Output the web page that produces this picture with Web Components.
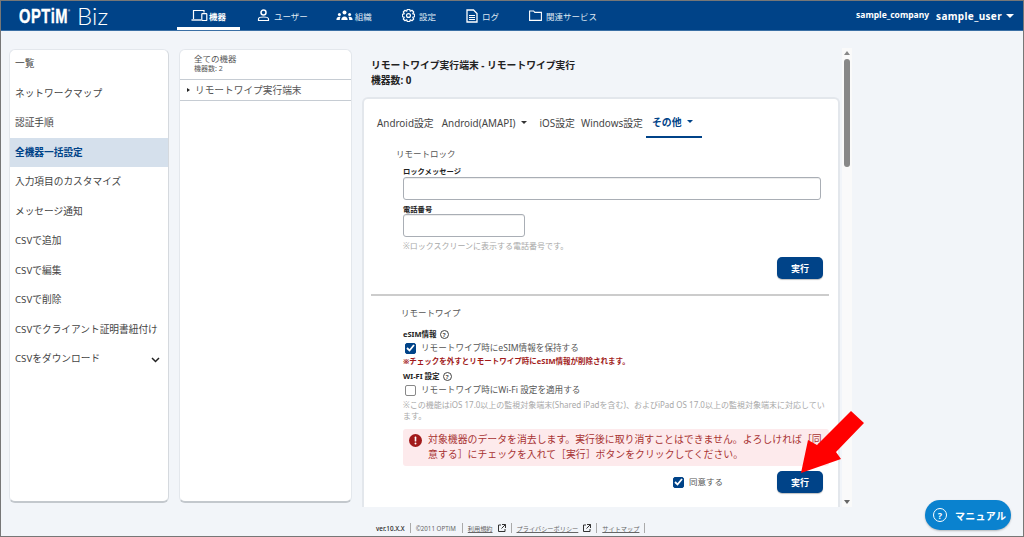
<!DOCTYPE html>
<html lang="ja"><head><meta charset="utf-8"><title>OPTiM Biz</title>
<style>
html,body{margin:0;padding:0;background:#f2f5f9}
body{font-family:"Noto Sans","Noto Sans CJK JP",sans-serif;color:#444}
</style></head><body>
<app-frame>
  <app-header>
    <nav-item active icon="device">機器</nav-item>
    <nav-item icon="user">ユーザー</nav-item>
    <nav-item icon="org">組織</nav-item>
    <nav-item icon="gear">設定</nav-item>
    <nav-item icon="doc">ログ</nav-item>
    <nav-item icon="folder">関連サービス</nav-item>
  </app-header>
  <app-body>
    <side-menu>
      <menu-item>一覧</menu-item>
      <menu-item>ネットワークマップ</menu-item>
      <menu-item>認証手順</menu-item>
      <menu-item active>全機器一括設定</menu-item>
      <menu-item>入力項目のカスタマイズ</menu-item>
      <menu-item>メッセージ通知</menu-item>
      <menu-item>CSVで追加</menu-item>
      <menu-item>CSVで編集</menu-item>
      <menu-item>CSVで削除</menu-item>
      <menu-item>CSVでクライアント証明書紐付け</menu-item>
      <menu-item chevron>CSVをダウンロード</menu-item>
    </side-menu>
    <tree-panel></tree-panel>
    <main-pane>
      <page-title></page-title>
      <settings-card>
        <tab-bar></tab-bar>
        <lock-section></lock-section>
        <wipe-section></wipe-section>
      </settings-card>
    </main-pane>
    <fake-scroll></fake-scroll>
  </app-body>
  <app-footer></app-footer>
  <red-arrow></red-arrow>
  <manual-button></manual-button>
</app-frame>
<script>
const JP='"Noto Sans","Noto Sans CJK JP",sans-serif';
function def(name,css,html,init){
  customElements.define(name,class extends HTMLElement{
    connectedCallback(){
      if(this.shadowRoot)return;
      const r=this.attachShadow({mode:'open'});
      r.innerHTML='<style>'+css+'</style>'+(typeof html==='function'?html(this):html);
      if(init)init(this,r);
    }
  });
}
function gearPath(){
  let d='';const n=8;
  for(let i=0;i<n;i++){
    const a=i*2*Math.PI/n,w=Math.PI/n;
    const pts=[[a-w*.95,8.6],[a-w*.5,11.6],[a+w*.5,11.6],[a+w*.95,8.6]];
    pts.forEach((p,j)=>{d+=(i===0&&j===0?'M':'L')+(12+p[1]*Math.sin(p[0])).toFixed(2)+' '+(12-p[1]*Math.cos(p[0])).toFixed(2);});
  }
  return d+'z';
}
const ICONS={
 device:'<svg width="17" height="13" viewBox="0 0 17 13" fill="none" stroke="#fff" stroke-width="1.2"><path d="M2.500 10V1.500H13V3.500"/><path d="M.5 11h9.500" stroke-width="1.400"/><rect x="10.800" y="4.600" width="5" height="6.900" rx=".6"/></svg>',
 user:'<svg width="13" height="13" viewBox="0 0 13 13" fill="none" stroke="#fff" stroke-width="1.500"><circle cx="6.500" cy="3.600" r="2.500"/><path d="M1.500 11.500V10c0-1.200 2-2 5-2s5 .8 5 2v1.500z" stroke-width="1.200"/></svg>',
 org:'<svg width="17" height="11" viewBox="0 0 17 11" fill="#fff"><circle cx="8.500" cy="2.600" r="2"/><path d="M5.300 10c0-2.300 1.300-3.600 3.200-3.600s3.200 1.300 3.200 3.600z"/><circle cx="3.400" cy="4.400" r="1.500"/><path d="M.4 10c0-2 1.200-3.200 3-3.200.5 0 .8.1 1.100.3-.5.8-.7 1.800-.7 2.900z"/><circle cx="13.600" cy="4.400" r="1.500"/><path d="M16.600 10c0-2-1.200-3.200-3-3.200-.5 0-.8.1-1.100.3.5.8.7 1.800.7 2.900z"/></svg>',
 gear:`<svg width="13" height="13" viewBox="0 0 24 24" fill="none" stroke="#fff" stroke-width="2.200" stroke-linejoin="round"><circle cx="12" cy="12" r="3.600"/><path d="${gearPath()}"/></svg>`,
 doc:'<svg width="12" height="14" viewBox="0 0 12 14" fill="none" stroke="#fff" stroke-width="1.300"><path d="M1 1h6.500L11 4.500V13H1z"/><path d="M3 6.500h6M3 8.500h6M3 10.500h6" stroke-width="1"/></svg>',
 folder:'<svg width="13" height="11" viewBox="0 0 13 11" fill="none" stroke="#fff" stroke-width="1.100"><path d="M.6 1h4l1.200 1.400h6.600v8H.6z"/></svg>'
};
def('app-frame',`:host{display:flex;flex-direction:column;position:relative;box-sizing:border-box;width:1024px;height:537px;border:1px solid #777;background:#f2f5f9;overflow:hidden;font-family:${JP}}`,'<slot></slot>');
def('app-header',`:host{display:flex;align-items:center;height:30px;flex:none;background:#004388;border-bottom:1px solid #3a6fa5;box-sizing:border-box;color:#fff}
.logo{width:176px;box-sizing:border-box;padding-left:18px;display:flex;align-items:center;flex:none;height:100%}
.o{font:700 21px/1 "Liberation Sans",sans-serif;transform:scaleX(.7);transform-origin:left center;width:52px;letter-spacing:.8px;white-space:nowrap;-webkit-text-stroke:.4px #fff}
.r{font-size:4px;vertical-align:11px;-webkit-text-stroke:0}
.b{font:300 24px/1 Lato,sans-serif;margin-left:6px;letter-spacing:.2px}
nav{display:flex;gap:2px;height:100%}
.sp{flex:1}
.co{font:700 8.500px/1 "Noto Sans",sans-serif;margin-right:7px}
.us{font:700 10px/1 "Noto Sans",sans-serif;letter-spacing:.35px}
.ca{width:0;height:0;border:4px solid transparent;border-top:4px solid #fff;border-bottom:0;margin:0 9px 0 4px}`,
`<div class="logo"><span class="o">OPTiM<span class="r">®</span></span><span class="b">Biz</span></div><nav><slot></slot></nav><span class="sp"></span><span class="co">sample_company</span><span class="us">sample_user</span><span class="ca"></span>`);
def('nav-item',`:host{display:flex;align-items:center;gap:4px;padding:0 14px;height:100%;box-sizing:border-box;font-size:8.500px;color:#dfe8f2;white-space:nowrap}
:host([icon=org]){gap:2px}
:host([icon=user]){margin-right:-2px}
:host([active]){color:#fff;font-weight:700;border-bottom:3px solid #fff;padding-top:3px;gap:1px;margin-right:1px}
svg{display:block;flex:none}
span{display:flex;align-items:center}`,
h=>`<span>${ICONS[h.getAttribute('icon')]}</span><slot></slot>`);
def('app-body',`:host{display:flex;flex:1;min-height:0;padding:17px 0 0 8px;gap:10px;box-sizing:border-box}`,'<slot></slot>');
def('side-menu',`:host{display:block;width:160px;flex:none;box-sizing:border-box;margin:1px 0 4px;background:#fff;border-radius:6px;border:1px solid #e3e7ec;border-bottom:2px solid #c3c8cd;border-right:1px solid #d5d9de;overflow:hidden}
.w{margin-top:-1px}`,'<div class="w"><slot></slot></div>');
def('menu-item',`:host{display:flex;align-items:center;justify-content:space-between;height:29.500px;padding:0 8px 1.500px 5px;box-sizing:border-box;font-size:9.700px;color:#444;white-space:nowrap}
:host([active]){background:#d5e0ec;color:#004388;font-weight:700}
svg{display:block;margin-top:3px}`,
h=>`<slot></slot>${h.hasAttribute('chevron')?'<svg width="9" height="6" viewBox="0 0 9 6" fill="none" stroke="#222" stroke-width="1.500"><path d="M1 1l3.500 3.500L8 1"/></svg>':''}`);
def('tree-panel',`:host{display:block;width:173px;flex:none;box-sizing:border-box;margin:1px 0 4px;background:#fff;border-radius:6px;border:1px solid #e3e7ec;border-bottom:2px solid #c3c8cd;overflow:hidden;color:#555}
.h{height:30px;box-sizing:border-box;padding:3px 0 0 14px;border-bottom:1px solid #c6ccd3;font-size:8.500px;line-height:11px}
.h small{display:block;font-size:7px;line-height:10px;color:#555}
.r{height:21px;box-sizing:border-box;border-bottom:1.500px solid #c6ccd3;display:flex;align-items:center;font-size:9.700px;padding-left:7px;gap:5px;white-space:nowrap}
.t{width:0;height:0;border:2.500px solid transparent;border-left:3px solid #222;border-right:0}`,
`<div class="h">全ての機器<small>機器数: 2</small></div><div class="r"><span class="t"></span>リモートワイプ実行端末</div>`);
def('main-pane',`:host{display:block;width:478px;flex:none;min-height:0;overflow:hidden}`,'<slot></slot>');
def('page-title',`:host{display:block;height:49px;box-sizing:border-box;padding:10px 0 0 9px;font-size:9.800px;font-weight:700;line-height:15px;color:#222}`,`<div>リモートワイプ実行端末 - リモートワイプ実行</div><div>機器数: 0</div>`);
def('settings-card',`:host{display:block;box-sizing:border-box;background:#fff;border-radius:6px 6px 0 0;border:2px solid #e3e7ec;border-bottom:0;height:500px}`,'<slot></slot>');
def('tab-bar',`:host{display:flex;height:39px;box-sizing:border-box;padding:0 0 0 13px;font-size:9.900px;color:#444;white-space:nowrap}
.t{display:flex;align-items:center;padding-top:8px;gap:5px}
.a{color:#004388;font-weight:700;border-bottom:2px solid #004388;padding:8px 9px 0 6px;margin-left:3px;box-sizing:border-box}
.c{width:0;height:0;border:3px solid transparent;border-top:3.500px solid currentColor;border-bottom:0}
.d{color:#333}`,
`<span class="t">Android設定</span><span class="t" style="margin-left:8px">Android(AMAPI)<i class="c d"></i></span><span class="t" style="margin-left:13px">iOS設定</span><span class="t" style="margin-left:6px">Windows設定</span><span class="t a">その他<i class="c"></i></span>`);
def('x-check',`:host{display:flex;align-items:center;gap:5px;font-size:8.600px;line-height:12px;color:#555;white-space:nowrap}
b{display:flex;align-items:center;justify-content:center;width:11px;height:11px;box-sizing:border-box;border:1px solid #888;border-radius:2px;background:#fff;flex:none}
:host([checked]) b{background:#004388;border-color:#004388}`,
h=>`<b>${h.hasAttribute('checked')?'<svg width="9" height="8" viewBox="0 0 9 8" fill="none" stroke="#fff" stroke-width="1.800"><path d="M1 4l2.500 2.500L8 1"/></svg>':''}</b><span><slot></slot></span>`);
def('x-help',`:host{display:inline-flex;margin-left:3px}
span{display:flex;align-items:center;justify-content:center;width:9px;height:9px;box-sizing:border-box;border:1px solid #444;border-radius:50%;font:700 6px/1 "Noto Sans",sans-serif;color:#444}`,'<span>?</span>');
def('x-button',`:host{display:flex;align-items:center;justify-content:center;width:46px;height:22px;background:#004388;border-radius:5px;color:#fff;font-size:9px;font-weight:700;box-shadow:0 1px 1px rgba(0,0,0,.25);flex:none}`,'<slot></slot>');
const LABEL='.l{font-size:7.300px;font-weight:700;color:#222;line-height:11px}';
const INPUT='.i{display:block;box-sizing:border-box;height:23px;border:1px solid #a9aeb5;border-radius:3px;background:#fff;box-shadow:inset 0 1px 0 #eee}';
def('lock-section',`:host{display:block;height:156px;box-sizing:border-box;padding:10px 7px 0 32px}
.s{font-size:8.500px;color:#555;line-height:12px;margin-bottom:6px}
.f{padding-left:7px}
${LABEL}${INPUT}
.n{font-size:8px;color:#a8a8a8;line-height:11px;margin-top:3px}
.a{display:flex;justify-content:flex-end;margin:6px 8px 0 0}`,
`<div class="s">リモートロック</div><div class="f"><div class="l">ロックメッセージ</div><div class="i" style="width:418px"></div><div class="l" style="margin-top:5px;line-height:9px">電話番号</div><div class="i" style="width:122px"></div><div class="n">※ロックスクリーンに表示する電話番号です。</div><div class="a"><x-button>実行</x-button></div></div>`);
def('wipe-section',`:host{display:block;box-sizing:border-box;margin:0 9px 0 7px;border-top:2px solid #ccc;padding:11px 0 0 29px}
.s{font-size:8.500px;color:#555;line-height:12px;margin-bottom:10px;margin-left:1px}
.f{padding-left:3px}
${LABEL}
.l{display:flex;align-items:center;font-size:7.500px}
x-check{margin:2px 0 0 2px}
.r{font-size:7.500px;font-weight:700;color:#a11a1a;line-height:11px;margin-top:2px}
.n{font-size:8px;color:#a8a8a8;line-height:11px;margin-top:3px;width:427px}
.al{display:flex;gap:6px;width:426px;box-sizing:border-box;margin-top:8px;background:#fdeaec;border-radius:3px;padding:3px 0 4px 6px;color:#a83232;font-size:9.900px;line-height:15px}
.al svg{flex:none;margin-top:1.500px}
.ag{display:flex;align-items:center;justify-content:flex-end;width:420px;margin-top:5px}
.ag x-check{margin:0 54px 0 0;font-size:8.500px}`,
`<div class="s">リモートワイプ</div><div class="f"><div class="l">eSIM情報<x-help></x-help></div><x-check checked>リモートワイプ時にeSIM情報を保持する</x-check><div class="r">※チェックを外すとリモートワイプ時にeSIM情報が削除されます。</div><div class="l" style="margin-top:4px">WI-FI 設定<x-help></x-help></div><x-check>リモートワイプ時にWi-Fi 設定を適用する</x-check><div class="n">※この機能はiOS 17.0以上の監視対象端末(Shared iPadを含む)、およびiPad OS 17.0以上の監視対象端末に対応しています。</div><div class="al"><svg width="13" height="13" viewBox="0 0 13 13"><circle cx="6.500" cy="6.500" r="6.500" fill="#a11a1a"/><rect x="5.700" y="2.600" width="1.600" height="5" rx=".6" fill="#fff"/><circle cx="6.500" cy="9.500" r="1" fill="#fff"/></svg><div>対象機器のデータを消去します。実行後に取り消すことはできません。よろしければ［同意する］にチェックを入れて［実行］ボタンをクリックしてください。</div></div><div class="ag"><x-check checked>同意する</x-check><x-button>実行</x-button></div></div>`);
def('fake-scroll',`:host{display:flex;flex-direction:column;align-items:center;width:10px;flex:none;background:#fafafa;margin-left:-8px;box-sizing:border-box;padding:3px 0}
.u,.d{width:0;height:0;border:3px solid transparent}
.u{border-bottom:4px solid #888;border-top:0}
.d{border-top:4px solid #666;border-bottom:0;margin-top:auto}
.th{width:6px;height:108px;background:#888;border-radius:3px;margin-top:4px}`,
`<i class="u"></i><i class="th"></i><i class="d"></i>`);
def('app-footer',`:host{display:flex;align-items:center;height:29px;flex:none;box-sizing:border-box;padding:13px 0 0 375px;font-size:6.200px;color:#666;white-space:nowrap}
span{display:flex;align-items:center;height:10px;padding:0 5px;border-right:1px solid #aaa}
span:first-of-type{padding-left:0;color:#222;font-size:6.300px;font-weight:500}
span:nth-of-type(2){padding-right:6px}
u{text-underline-offset:1px;margin-right:5px}
u:last-child{margin-right:0}`,
`<span>ver.10.X.X</span><span>©2011 OPTiM</span>${['利用規約','プライバシーポリシー'].map(t=>`<span><u>${t}</u><svg width="8" height="8" viewBox="0 0 8 8" fill="none" stroke="#333" stroke-width="1"><path d="M3 1H.5v6.500H7V5M4 .5h3.500V4M7.500 .5L3.500 4.500"/></svg></span>`).join('')}<span><u>サイトマップ</u></span>`);
def('red-arrow',`:host{position:absolute;left:0;top:0;display:block;pointer-events:none}svg{display:block}`,
`<svg width="1024" height="537" viewBox="1 1 1024 537"><polygon points="851,411 864,423 836,452 841,459 801,473 808,440 817,445" fill="#f00"/></svg>`);
def('manual-button',`:host{position:absolute;left:924px;top:499px;width:86px;height:30px;box-sizing:border-box;display:flex;align-items:center;padding-left:8px;gap:8px;background:#0a82cf;border-radius:15px;color:#fff;font-size:10px;font-weight:700;letter-spacing:.3px;box-shadow:0 1px 2px rgba(0,0,0,.25);white-space:nowrap}
i{display:flex;align-items:center;justify-content:center;width:14px;height:14px;box-sizing:border-box;border:1.500px solid #fff;border-radius:50%;font:700 9px/1 "Noto Sans",sans-serif}`,
`<i>?</i><span>マニュアル</span>`);
</script>
</body></html>
